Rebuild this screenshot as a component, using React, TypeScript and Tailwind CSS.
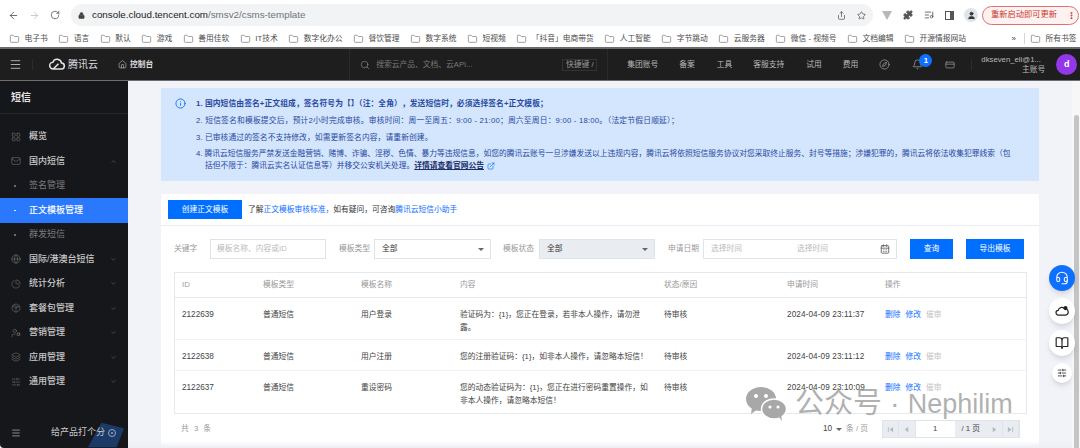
import {
  ArrowLeft, ArrowRight, RotateCw, Lock, Share, Star, Puzzle, ListMusic, User, MoreVertical, Folder,
  Menu, Home, Search, Compass, Bell, CreditCard, LayoutGrid, Mail, Globe, PieChart, Package, UserCog, Layers,
  SlidersHorizontal, ChevronUp, ChevronDown, Info, ExternalLink, CalendarDays, Headset, BookOpen,
} from 'lucide-react';

const bookmarks = [
  '电子书', '语言', '默认', '游戏', '善用佳软', 'IT技术', '数字化办公', '餐饮管理', '数字系统', '短视频',
  '「抖音」电商带货', '人工智能', '字节跳动', '云服务器', '微信 - 视频号', '文档编辑', '开源情报网站',
];

const navLinks = [
  { name: '集团账号', ml: 'ml-[19px]' },
  { name: '备案', ml: 'ml-[21px]' },
  { name: '工具', ml: 'ml-[22px]' },
  { name: '客服支持', ml: 'ml-[21px]' },
  { name: '试用', ml: 'ml-[22px]' },
  { name: '费用', ml: 'ml-[21px]' },
];

const rows = [
  { id: '2122639', name: '用户登录', content: '验证码为：{1}，您正在登录，若非本人操作，请勿泄\n露。', time: '2024-04-09 23:11:37', h: 'h-[42px]' },
  { id: '2122638', name: '用户注册', content: '您的注册验证码：{1}，如非本人操作，请忽略本短信！', time: '2024-04-09 23:11:12', h: 'h-[31px]' },
  { id: '2122637', name: '重设密码', content: '您的动态验证码为：{1}，您正在进行密码重置操作，如\n非本人操作，请忽略本短信！', time: '2024-04-09 23:10:09', h: 'h-[42px]' },
];

const tableCols = 'grid grid-cols-[81px_98px_99px_204px_123px_98px_1fr]';

function Triangle() {
  return <span className="w-0 h-0 border-x-[3px] border-x-transparent border-t-[3px] border-t-[#666]" />;
}

function MenuRow({ icon: Icon, label, chevron }: { icon: any; label: string; chevron?: 'up' | 'down' }) {
  return (
    <div className="h-[24.5px] flex items-center pl-[11px] pr-[11px] text-[9px] text-[#c9c9c9] font-medium">
      <Icon className="w-[10px] h-[10px] mr-[8px] text-[#6d6d6d]" strokeWidth={1.5} />
      <span className="flex-1">{label}</span>
      {chevron === 'up' && <ChevronUp className="w-[7px] h-[7px] text-[#666]" />}
      {chevron === 'down' && <ChevronDown className="w-[7px] h-[7px] text-[#666]" />}
    </div>
  );
}

function SubRow({ label, active }: { label: string; active?: boolean }) {
  return (
    <div className={`h-[24.5px] flex items-center pl-[14px] text-[9px] ${active ? 'bg-[#2a78fb] text-white font-medium' : 'text-[#7c7c7c]'}`}>
      <span className={`w-[1.5px] h-[1.5px] rounded-full mr-[13.5px] ${active ? 'bg-white' : 'bg-[#8a8a8a]'}`} />
      {label}
    </div>
  );
}

// first / prev / next / last arrows of the pager
function Pager({ d }: { d: string }) {
  return (
    <div className="w-[16.5px] h-full flex items-center justify-center border-r border-[#dfe3ea]">
      <svg viewBox="0 0 8 8" className="w-[7px] h-[7px]" fill="#b3b8c1"><path d={d} /></svg>
    </div>
  );
}

export default function App() {
  return (
    <div className="relative w-[1080px] h-[448px] overflow-hidden flex flex-col bg-white font-['Liberation_Sans','Noto_Sans_CJK_SC',sans-serif]">
      {/* browser chrome */}
      <div className="h-[30px] shrink-0 flex items-center text-[#5f6368]">
        <ArrowLeft className="w-[11px] h-[11px] ml-[8px]" strokeWidth={2} />
        <ArrowRight className="w-[11px] h-[11px] ml-[10px] text-[#c4c6c9]" strokeWidth={2} />
        <RotateCw className="w-[10px] h-[10px] ml-[10px]" strokeWidth={2} />
        <div className="ml-[11px] w-[802px] h-[22px] rounded-full bg-[#f1f3f4] flex items-center">
          <Lock className="w-[7px] h-[7px] ml-[7px] text-[#444]" fill="#444" />
          <span className="ml-[7px] text-[9.8px] text-[#222]">console.cloud.tencent.com<span className="text-[#70757a]">/smsv2/csms-template</span></span>
          <Share className="w-[9px] h-[9px] ml-auto text-[#555]" />
          <Star className="w-[9px] h-[9px] ml-[11px] mr-[7px] text-[#555]" />
        </div>
        <span className="ml-[9px] w-0 h-0 border-x-[5px] border-x-transparent border-t-[9px] border-t-[#b4b7bb]" />
        <Puzzle className="w-[10px] h-[10px] ml-[11px] text-[#555]" fill="#555" />
        <ListMusic className="w-[10px] h-[10px] ml-[11px] text-[#555]" />
        <span className="ml-[11px] w-[9px] h-[9px] border border-[#555] border-r-[4px]" />
        <span className="ml-[10px] w-[14px] h-[14px] rounded-full bg-[#dfe3ea] flex items-center justify-center">
          <User className="w-[9px] h-[9px] text-[#333]" fill="#333" />
        </span>
        <div className="ml-[4px] w-[97px] h-[19px] rounded-full border border-[#e2716a] bg-[#fdf2f1] flex items-center pl-[8px] text-[8.25px] text-[#c5362c]">
          重新启动即可更新
          <MoreVertical className="w-[9px] h-[9px] ml-auto mr-[2px]" strokeWidth={3} />
        </div>
      </div>
      <div className="h-[19px] shrink-0 flex items-center pl-[9px] gap-[10.5px] text-[7.75px] text-[#4a4a4a] whitespace-nowrap border-b-[2px] border-[#6b6b6b]">
        {bookmarks.map((b) => (
          <div key={b} className="flex items-center gap-[4.5px]">
            <Folder className="w-[11px] h-[10px] text-[#666]" strokeWidth={1.5} />
            {b}
          </div>
        ))}
        <span className="ml-[35px] text-[8px]">»</span>
        <span className="ml-[-2px] w-px h-[11px] bg-[#d5d5d5]" />
        <div className="ml-[-6px] flex items-center gap-[4.5px]">
          <Folder className="w-[11px] h-[10px] text-[#666]" strokeWidth={1.5} />
          所有书签
        </div>
      </div>

      {/* console top nav */}
      <div className="h-[31px] shrink-0 bg-[#1e1e1e] flex items-center text-[7.75px] text-[#b9b9b9] whitespace-nowrap">
        <Menu className="w-[13px] h-[13px] ml-[9px] text-[#d0d0d0]" strokeWidth={1.5} />
        <span className="ml-[10px] w-px h-[11px] bg-[#2c2c2c]" />
        <svg viewBox="0 0 24 16" className="w-[18px] h-[13px] ml-[15px]" fill="none" stroke="#e4e4e4" strokeWidth="2">
          <path d="M7 14a4.5 4.5 0 0 1-.5-9A6 6 0 0 1 18 6a4 4 0 0 1-.5 8H7l7-7" />
        </svg>
        <span className="ml-[2px] text-[10px] text-[#dcdcdc]">腾讯云</span>
        <Home className="w-[9px] h-[9px] ml-[20px] text-[#cfcfcf]" strokeWidth={1.5} />
        <span className="ml-[3px] text-[7.75px] text-[#dcdcdc] font-bold">控制台</span>
        <span className="ml-[196px] w-px h-[31px] bg-[#2a2a2a]" />
        <Search className="w-[10px] h-[10px] ml-[10px] text-[#8d8d8d]" strokeWidth={1.5} />
        <span className="ml-[6px] w-[186px] text-[#777]">搜索云产品、文档、云API...</span>
        <span className="w-[35px] h-[12px] border border-[#333] flex items-center justify-center text-[#999]">快捷键 /</span>
        <span className="ml-[10px] w-px h-[31px] bg-[#2a2a2a]" />
        {navLinks.map((n) => (
          <span key={n.name} className={n.ml}>{n.name}</span>
        ))}
        <Compass className="w-[11px] h-[11px] ml-[21px] text-[#a9a9a9]" strokeWidth={1.5} />
        <div className="relative ml-[22px]">
          <Bell className="w-[11px] h-[11px] text-[#a9a9a9]" strokeWidth={1.5} />
          <span className="absolute -top-[5px] left-[7px] w-[13px] h-[13px] rounded-full bg-[#0f6fff] text-white text-[7.75px] flex items-center justify-center font-bold">1</span>
        </div>
        <CreditCard className="w-[10px] h-[10px] ml-[22px] text-[#a9a9a9]" strokeWidth={1.5} />
        <span className="ml-[16px] w-px h-[11px] bg-[#2c2c2c]" />
        <div className="ml-[9px] w-[65px] flex flex-col items-end leading-[10px] pr-[1px]">
          <span className="self-start">dkseven_eli@1...</span>
          <span>主账号</span>
        </div>
        <span className="ml-[10px] w-[21px] h-[21px] rounded-full bg-[#9238ea] text-white text-[9px] font-bold flex items-center justify-center">d</span>
      </div>

      <div className="flex-1 min-h-0 flex border-t border-[#6e6e6e]">
        {/* sidebar */}
        <aside className="relative w-[128px] shrink-0 bg-[#16171a] flex flex-col overflow-hidden rounded-bl-[4px]">
          <div className="h-[33px] shrink-0 border-b border-[#26272b] flex items-center pl-[11px] text-[10px] text-[#e4e4e4] font-bold">短信</div>
          <div className="pt-[10.5px]">
            <MenuRow icon={LayoutGrid} label="概览" />
            <MenuRow icon={Mail} label="国内短信" chevron="up" />
            <SubRow label="签名管理" />
            <SubRow label="正文模板管理" active />
            <SubRow label="群发短信" />
            <MenuRow icon={Globe} label="国际/港澳台短信" chevron="down" />
            <MenuRow icon={PieChart} label="统计分析" chevron="down" />
            <MenuRow icon={Package} label="套餐包管理" chevron="down" />
            <MenuRow icon={UserCog} label="营销管理" chevron="down" />
            <MenuRow icon={Layers} label="应用管理" chevron="down" />
            <MenuRow icon={SlidersHorizontal} label="通用管理" chevron="down" />
          </div>
          <svg viewBox="0 0 40 26" className="absolute left-[88px] bottom-0 w-[38px] h-[26px]">
            <path d="M14 0 L38 6 L30 26 L0 26 Z" fill="#1c3a68" />
          </svg>
          <div className="relative mt-auto h-[30px] shrink-0 flex items-center pl-[11px] text-[9px] text-[#c9c9c9]">
            <Menu className="w-[10px] h-[10px] text-[#d0d0d0]" strokeWidth={1.5} />
            <span className="ml-[30px]">给产品打个分</span>
            <span className="ml-[3px] w-[8px] h-[8px] rounded-full border border-[#8fa8c9] flex items-center justify-center">
              <span className="w-[2px] h-[2px] rounded-full bg-[#8fa8c9]" />
            </span>
          </div>
        </aside>

        {/* main */}
        <main className="flex-1 min-w-0 bg-[#f2f3f8] pt-[7px] px-[33px] text-[7.75px] whitespace-nowrap">
          <div className="h-[93px] bg-[#d4e5fe] pl-[35px] pt-[10px] flex text-[#284a9e] leading-[12px] relative">
            <Info className="absolute left-[14px] top-[10px] w-[11px] h-[11px] text-[#0f6fff]" strokeWidth={2} />
            <div className="flex flex-col">
              <div className="font-bold h-[16.5px] tracking-[0.1px]">1. 国内短信由签名+正文组成，签名符号为【】（注：全角），发送短信时，必须选择签名+正文模板；</div>
              <div className="h-[17px] tracking-[0.2px]">2. 短信签名和模板提交后，预计2小时完成审核。审核时间：周一至周五：9:00 - 21:00；周六至周日：9:00 - 18:00。（法定节假日顺延）；</div>
              <div className="h-[16.5px] tracking-[0.1px]">3. 已审核通过的签名不支持修改，如需更新签名内容，请重新创建。</div>
              <div>4. 腾讯云短信服务严禁发送金融营销、赌博、诈骗、淫秽、色情、暴力等违规信息，如您的腾讯云账号一旦涉嫌发送以上违规内容，腾讯云将依照短信服务协议对您采取终止服务、封号等措施；涉嫌犯罪的，腾讯云将依法收集犯罪线索（包</div>
              <div className="pl-[9px] flex items-center">
                括但不限于：腾讯云实名认证信息等）并移交公安机关处理。
                <span className="font-bold underline text-[#1c2f66]">详情请查看官网公告</span>
                <ExternalLink className="ml-[3px] w-[8px] h-[8px] text-[#0f6fff]" strokeWidth={2} />
              </div>
            </div>
          </div>

          <section className="mt-[13px] h-[260px] bg-white text-[#444]">
            <div className="h-[32px] border-b border-[#e9ecf1] flex items-center pl-[7px]">
              <button className="w-[74px] h-[19px] bg-[#006eff] text-white">创建正文模板</button>
              <span className="ml-[6px] text-[#333]">了解<span className="text-[#0f6fff]">正文模板审核标准，</span>如有疑问，可咨询<span className="text-[#0f6fff]">腾讯云短信小助手</span></span>
            </div>

            <div className="h-[46px] flex items-center pl-[13px]">
              <span className="w-[36px] text-[#999]">关键字</span>
              <div className="w-[116px] h-[20px] border border-[#dfe3ea] flex items-center pl-[6px] text-[#bbb]">模板名称、内容或ID</div>
              <span className="ml-[13px] w-[35px] text-[#999]">模板类型</span>
              <div className="w-[117px] h-[20px] border border-[#dfe3ea] flex items-center justify-between pl-[7px] pr-[6px] text-[#333]">全部<Triangle /></div>
              <span className="ml-[12px] w-[36px] text-[#999]">模板状态</span>
              <div className="w-[116px] h-[20px] border border-[#dfe3ea] bg-[#e9ecf1] flex items-center justify-between pl-[7px] pr-[6px] text-[#333]">全部<Triangle /></div>
              <span className="ml-[13px] w-[35px] text-[#999]">申请日期</span>
              <div className="w-[194px] h-[20px] border border-[#dfe3ea] flex items-center pl-[7px] pr-[6px] text-[#bbb]">
                <span className="w-[86px]">选择时间</span>
                <span>选择时间</span>
                <CalendarDays className="ml-auto w-[10px] h-[10px] text-[#555]" strokeWidth={2} />
              </div>
              <button className="ml-[13px] w-[43px] h-[20px] bg-[#006eff] text-white">查询</button>
              <button className="ml-[13px] w-[58px] h-[20px] bg-[#006eff] text-white">导出模板</button>
            </div>

            <div className="ml-[13px] w-[853px] border border-[#e5e8ee]">
              <div className={`${tableCols} h-[25px] items-center border-b border-[#e5e8ee] text-[#999] [&>span]:pl-[7px]`}>
                <span>ID</span><span>模板类型</span><span>模板名称</span><span>内容</span><span>状态/原因</span><span>申请时间</span><span>操作</span>
              </div>
              {rows.map((r) => (
                <div key={r.id} className={`${tableCols} ${r.h} items-start pt-[11px] border-b border-[#f0f2f5] last:border-b-0 leading-[12.5px] [&>*]:pl-[7px]`}>
                  <span className="text-[8.2px]">{r.id}</span>
                  <span>普通短信</span>
                  <span>{r.name}</span>
                  <span className="whitespace-pre-line">{r.content}</span>
                  <span>待审核</span>
                  <span className="text-[8.2px] tracking-[0.1px]">{r.time}</span>
                  <span className="flex gap-[5px]">
                    <span className="text-[#0f6fff]">删除</span>
                    <span className="text-[#0f6fff]">修改</span>
                    <span className="text-[#c4c4c4]">催审</span>
                  </span>
                </div>
              ))}
            </div>

            <div className="mt-[6px] h-[18px] flex items-center pl-[20px] pr-[19px] text-[#999]">
              <span className="tracking-[1.5px]">共 3 条</span>
              <span className="ml-auto text-[#444] text-[8.2px]">10</span>
              <span className="ml-[4px] mr-[4px] flex items-center"><Triangle /></span>
              <span>条 / 页</span>
              <div className="ml-[14px] w-[138px] h-[18px] bg-[#e9ecf1] border border-[#dfe3ea] flex items-center">
                <Pager d="M1 1h1v6H1zM7 1v6L3 4z" />
                <Pager d="M6 1v6L2 4z" />
                <span className="w-[40px] h-full bg-white flex items-center justify-center text-[#444]">1</span>
                <span className="w-[32px] text-center text-[#444]">/ 1 页</span>
                <Pager d="M2 1v6l4-3z" />
                <Pager d="M1 1v6l4-3zM6 1h1v6H6z" />
              </div>
            </div>
          </section>
        </main>

        {/* page scrollbar */}
        <div className="w-[8px] shrink-0 bg-[#f7f7f8] pt-[34px] pl-[2px]">
          <div className="w-[5px] h-[333px] bg-[#c4c4c4] rounded-t-[3px]" />
        </div>
      </div>

      {/* fade along the page's bottom edge */}
      <div className="absolute left-[128px] right-[8px] bottom-0 h-[7px] bg-gradient-to-b from-transparent to-[#eceef3]" />

      {/* floating helpers */}
      <div className="absolute left-[1049px] top-[265px] w-[26px] h-[26px] rounded-full bg-[#0f6fff] flex items-center justify-center shadow-md">
        <Headset className="w-[14px] h-[14px] text-white" strokeWidth={1.75} />
      </div>
      <div className="absolute left-[1049px] top-[298px] w-[26px] h-[26px] rounded-full bg-white flex items-center justify-center shadow-md">
        <svg viewBox="0 0 24 20" className="w-[14px] h-[12px]" fill="none" stroke="#222" strokeWidth="2">
          <path d="M6 17a4 4 0 0 1-.5-8A6 6 0 0 1 16 6a5 5 0 0 1 2 11Z" />
          <circle cx="18" cy="5" r="3.5" fill="#222" stroke="none" />
        </svg>
      </div>
      <div className="absolute left-[1049px] top-[330px] w-[26px] h-[26px] rounded-full bg-white flex items-center justify-center shadow-md">
        <BookOpen className="w-[14px] h-[14px] text-[#222]" strokeWidth={2} />
      </div>
      <div className="absolute left-[1052px] top-[363px] w-[20px] h-[20px] rounded-full bg-white flex items-center justify-center shadow-md">
        <SlidersHorizontal className="w-[10px] h-[10px] text-[#333]" strokeWidth={2} />
      </div>

      {/* watermark */}
      <div className="absolute left-[745px] top-[387px] flex items-center text-[#8e8e8e]/70 pointer-events-none">
        <svg viewBox="0 0 42 34" className="w-[42px] h-[34px]" fill="#a8a8a8">
          <ellipse cx="16" cy="12" rx="15" ry="12" />
          <path d="M7 20 L6 27 L13 22 Z" />
          <ellipse cx="29" cy="22" rx="12.5" ry="10" stroke="#fff" strokeWidth="1.5" />
          <path d="M34 30 L37 34 L36 27 Z" />
          <circle cx="11" cy="9" r="2" fill="#fff" />
          <circle cx="21" cy="9" r="2" fill="#fff" />
          <circle cx="25" cy="20" r="1.6" fill="#fff" />
          <circle cx="33" cy="20" r="1.6" fill="#fff" />
        </svg>
        <span className="ml-[8px] text-[29px] leading-[25px] whitespace-nowrap">公众号 · <span className="text-[27px]">Nephilim</span></span>
      </div>
    </div>
  );
}
